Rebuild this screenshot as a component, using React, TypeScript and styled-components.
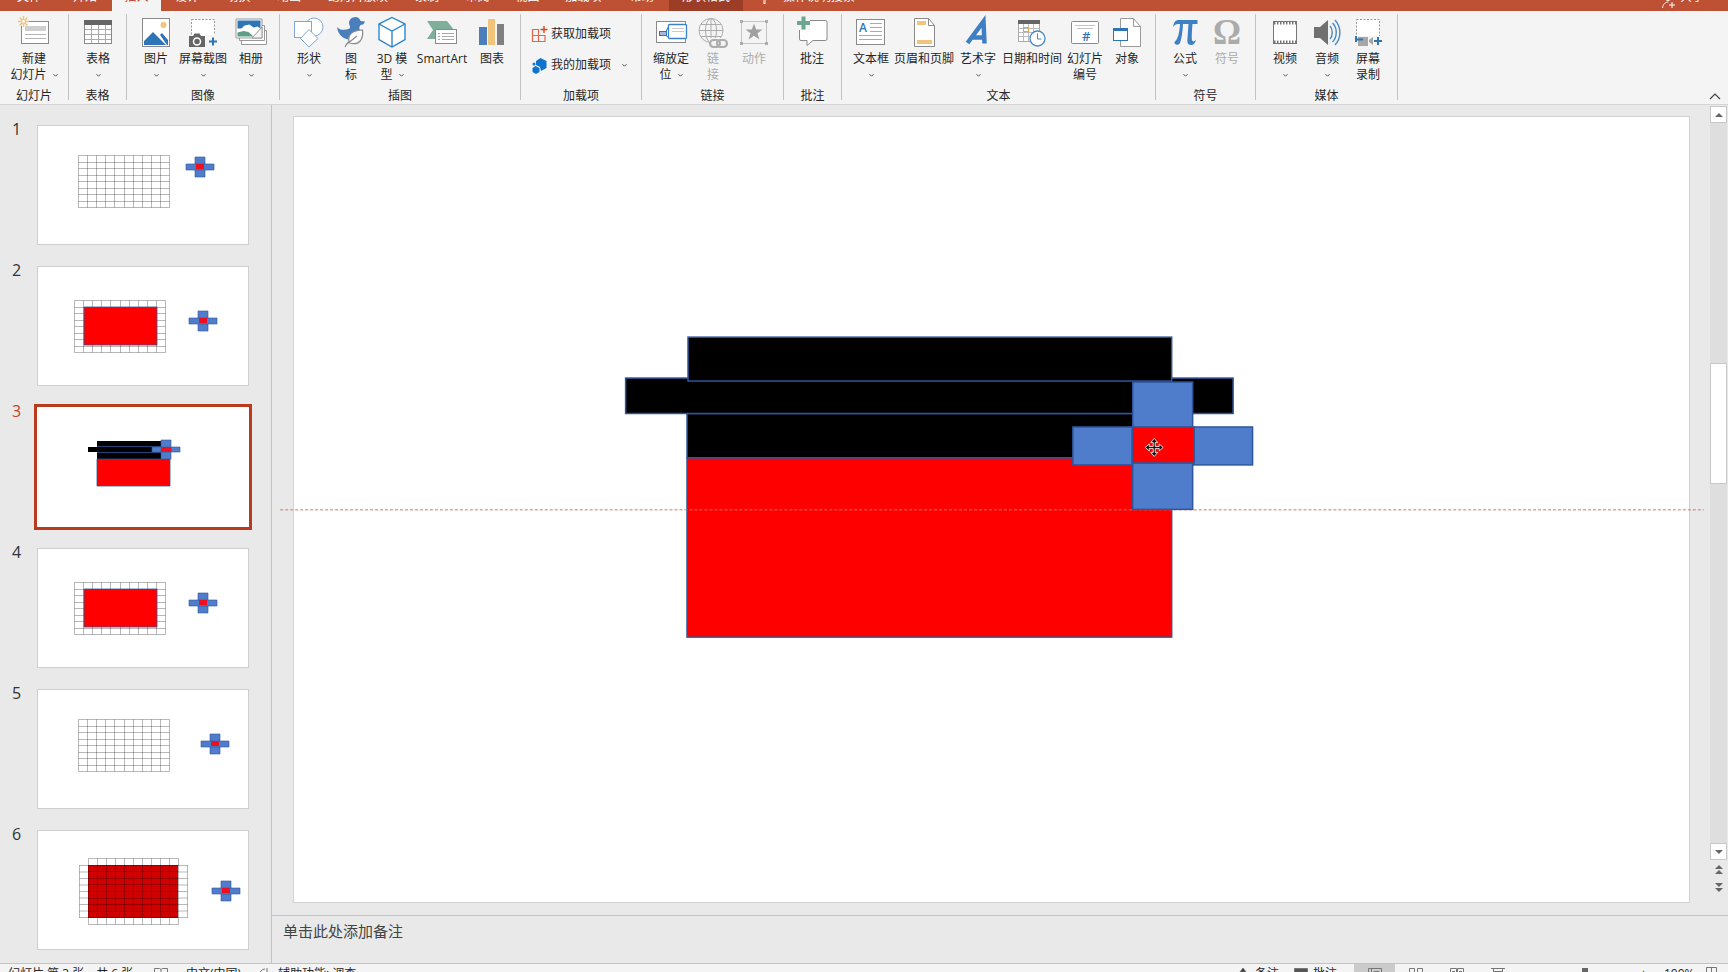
import React from 'react';
import styled, { createGlobalStyle } from 'styled-components';

const color = {
  brand: '#be5033',
  brandDark: '#9c3d27',
  accent: '#b83b1d',
  ribbon: '#f4f4f4',
  canvas: '#e9e9e9',
  line: '#c3c3c3',
  text: '#262626',
  muted: '#ababab',
  blue: '#2e75b6',
  steel: '#4a7fbb',
  grey: '#7a7a7a',
  green: '#7fae9b',
  gold: '#f0c47a',
  shape: '#4f7dcb',
  shapeLine: '#2f569c',
};

const GlobalStyle = createGlobalStyle`
  *, *::before, *::after { box-sizing: border-box; }
  body {
    margin: 0;
    overflow: hidden;
    background: ${color.canvas};
    color: ${color.text};
    font: 12px/16px "Open Sans", "Noto Sans CJK SC", sans-serif;
  }
  button, textarea { font: inherit; color: inherit; }
  button { margin: 0; padding: 0; border: 0; background: none; cursor: default; }
`;

const Shell = styled.div`
  display: flex;
  flex-direction: column;
  height: 100vh;
`;

/* ---------- tab strip ---------- */

const TabStrip = styled.nav`
  display: flex;
  align-items: flex-end;
  flex: none;
  height: 11px;
  overflow: hidden;
  background: ${color.brand};
  color: #fff;
`;

const Tab = styled.button<{ $width: number; $tone?: 'active' | 'context' }>`
  display: flex;
  align-items: flex-end;
  justify-content: center;
  flex: none;
  width: ${p => p.$width}px;
  height: 30px;
  padding-bottom: 6px;
  white-space: nowrap;
  background: ${p => (p.$tone === 'active' ? color.ribbon : p.$tone === 'context' ? color.brandDark : 'transparent')};
  color: ${p => (p.$tone === 'active' ? color.accent : '#fff')};
`;

const TellMe = styled.button`
  display: flex;
  align-items: flex-end;
  gap: 14px;
  height: 30px;
  padding: 0 0 6px 17px;
  svg { margin-bottom: -3px; }
`;

const Share = styled(TellMe)`
  margin-left: auto;
  padding-right: 24px;
  gap: 4px;
`;

/* ---------- ribbon ---------- */

const Ribbon = styled.div`
  display: flex;
  flex: none;
  height: 94px;
  padding: 3px 0 4px;
  background: ${color.ribbon};
  border-bottom: 1px solid #d6d6d6;
`;

const Group = styled.section<{ $width: number }>`
  display: flex;
  flex-direction: column;
  justify-content: space-between;
  flex: none;
  width: ${p => p.$width}px;
  border-right: 1px solid ${color.line};
`;

const GroupBody = styled.div<{ $pad: number }>`
  display: flex;
  padding-left: ${p => p.$pad}px;
`;

const GroupName = styled.h2`
  margin: 0;
  font-size: 12px;
  line-height: 8px;
  font-weight: 400;
  text-align: center;
`;

const Tool = styled.button<{ $width: number; $off?: boolean }>`
  display: flex;
  flex-direction: column;
  align-items: center;
  flex: none;
  width: ${p => p.$width}px;
  padding-top: 1px;
  white-space: nowrap;
  color: ${p => (p.$off ? color.muted : color.text)};
`;

const ToolIcon = styled.svg`
  display: block;
  width: 32px;
  height: 32px;
  margin-bottom: 4px;
  overflow: visible;
`;

const ToolLine = styled.span`
  display: flex;
  align-items: center;
  gap: 6px;
  height: 16px;
`;

const AddinList = styled.div`
  display: flex;
  flex-direction: column;
  gap: 7px;
  padding: 8px 0 0 10px;
`;

const AddinButton = styled.button`
  display: flex;
  align-items: center;
  gap: 3px;
  height: 24px;
`;

const AddinArrow = styled.span`
  display: flex;
  padding-left: 8px;
`;

const CollapseButton = styled.button`
  align-self: flex-end;
  margin-left: auto;
  padding-right: 7px;
  line-height: 8px;
  svg { display: block; }
`;

function Chevron() {
  return (
    <svg width="5" height="5" viewBox="0 0 5 5" aria-hidden="true">
      <path d="M0.5 1.2 2.5 3.2 4.5 1.2" fill="none" stroke="#555" />
    </svg>
  );
}

/* ---------- ribbon icons, each on a 32 × 32 grid ---------- */

const serifGlyph = { fontFamily: '"Liberation Serif", serif', fontWeight: 700 };
const sansGlyph = { fontFamily: '"Open Sans", sans-serif', fontWeight: 600 };

const icons: Record<string, React.ReactNode> = {
  newSlide: (
    <>
      <rect x="3.5" y="6.5" width="27" height="22" fill="#fff" stroke="#8a8a8a" />
      <rect x="7" y="11" width="21" height="5" fill="#cfcfcf" />
      <path d="M7 19.5h21M7 23.5h21" stroke="#b5b5b5" />
      <circle cx="5.5" cy="6.5" r="5" fill={color.ribbon} />
      <path d="M5.5 1v11M0 6.5h11M1.6 2.6l7.8 7.8M9.4 2.6 1.6 10.4" stroke={color.gold} strokeWidth="1.4" />
      <circle cx="5.5" cy="6.5" r="2" fill="#fff" stroke={color.gold} />
    </>
  ),
  table: (
    <>
      <rect x="2.5" y="5.5" width="27" height="23" fill="#fff" stroke="#8a8a8a" />
      <rect x="2" y="5" width="28" height="5" fill="#666" />
      <path d="M3 14.5h26M3 19.5h26M3 24.5h26M9.5 10v18M16.5 10v18M23.5 10v18" stroke="#aaa" />
    </>
  ),
  picture: (
    <>
      <rect x="2.5" y="3.5" width="27" height="28" fill="#fff" stroke="#8a8a8a" />
      <circle cx="23.5" cy="10" r="3" fill={color.gold} />
      <path d="M4 30v-4l9-9 13 13zM20 20l2-2 6 7v5h-1z" fill={color.blue} />
    </>
  ),
  screenshot: (
    <>
      <rect x="4.5" y="4.5" width="23" height="23" fill="#fff" stroke="#999" strokeDasharray="2 1.5" />
      <path d="M2 21h4l1.5-2.500h5L14 21h4v11H2z" fill="#666" />
      <circle cx="10" cy="26.500" r="3.500" fill="#666" stroke="#fff" strokeWidth="1.500" />
      <path d="M18.500 20h12v10h-12z" fill={color.ribbon} />
      <path d="M22 26.500h8M26 22.500v8" stroke={color.blue} strokeWidth="2" />
    </>
  ),
  album: (
    <>
      <path d="M6.500 15.500h25v14h-25z" fill="#fff" stroke="#999" />
      <path d="M4.500 10.500h25v15h-25z" fill="#fff" stroke="#999" />
      <path d="M1 4h26v19H1z" fill="#fff" stroke="#999" />
      <path d="M2.500 5.500h23v8l-3-2-4 1-4-3-5 1-3 3h-4z" fill={color.blue} />
      <path d="M2.500 21.500v-4l6-1.500 5 1 5 4.500z" fill="#5d9c86" />
      <path d="M17 23 27 12v11z" fill="#f4f4f4" stroke="#999" />
    </>
  ),
  shapes: (
    <>
      <circle cx="21" cy="12" r="9" fill="#fff" stroke="#7fa9d2" />
      <rect x="1.500" y="6.500" width="17" height="16" fill="#fff" stroke="#7fa9d2" />
      <path d="M16 14.500 25 23.500 16 32 7.500 23.500z" fill="#fff" stroke="#7fa9d2" />
    </>
  ),
  glyphs: (
    <>
      <path d="M14 7.500a6 6 0 0 1 11.600-1.500l4.400.500c-.500 2.500-2.500 3.500-4.500 3.500-1 2-2 3 0 5.500-6 1-9.500 5-10.500 9C8 24 3 20 2 12c3 3.500 8 3.500 12.500 1.500 1.500-1.500-.500-3-.500-6z" fill={color.steel} />
      <path d="M10 32c1-2 2.500-4 4-5.500-1.500-8 4-11 13.500-11.500 1 9-3 16-13 13z" fill="#fff" />
      <path d="M10 32c1-2 2.500-4 4-5.500-1.500-8 4-11 13.500-11.500 1 9-3 16-13 13M12 29l10-8" fill="none" stroke="#8a8a8a" strokeWidth="1.200" />
    </>
  ),
  cube: (
    <>
      <path d="M16 2.500 29 9v15.500L16 32 3 24.500V9z" fill="#fff" stroke="#1f7fcb" strokeWidth="1.300" />
      <path d="M3 9l13 7 13-7M16 16v16" fill="none" stroke="#1f7fcb" strokeWidth="1.300" />
    </>
  ),
  smartArt: (
    <>
      <path d="M1 6h20l7 9-7 9H1l6-9z" fill={color.green} />
      <rect x="9.500" y="14.500" width="21" height="14" fill="#fff" stroke="#8a8a8a" />
      <path d="M12 18.500h2M16 18.500h12M12 21.500h2M16 21.500h12M12 24.500h2M16 24.500h12" stroke="#aaa" />
    </>
  ),
  chart: (
    <>
      <path d="M3 12h8v18H3z" fill={color.steel} />
      <path d="M12 4h7v26h-7z" fill={color.gold} />
      <path d="M21 9h7v21h-7z" fill="#808080" />
    </>
  ),
  zoom: (
    <>
      <rect x="1.500" y="6.500" width="29" height="21" fill="#fff" stroke="#8a8a8a" />
      <rect x="4.500" y="16.500" width="7" height="4" fill="#a9b8d6" stroke={color.blue} />
      <path d="M11 16.500l3-6M11 20.500l3 2.500" stroke={color.blue} />
      <rect x="13.500" y="9.500" width="18" height="14" rx="1" fill="#fff" stroke="#3c82c8" strokeWidth="1.300" />
      <path d="M17 13.500h12M17 16.500h12" stroke="#ccc" />
    </>
  ),
  link: (
    <g fill="none" stroke="#adadad">
      <circle cx="14" cy="15.500" r="12" />
      <ellipse cx="14" cy="15.500" rx="5.500" ry="12" />
      <path d="M14 3.500v24M2 15.500h24M4 9.500h20M4 21.500h20" />
      <rect x="12" y="23" width="19" height="11" fill={color.ribbon} stroke="none" />
      <rect x="13" y="25" width="10" height="7" rx="3.500" strokeWidth="2.200" />
      <rect x="20" y="25" width="10" height="7" rx="3.500" strokeWidth="2.200" />
    </g>
  ),
  action: (
    <>
      <rect x="3.500" y="6.500" width="25" height="22" fill="none" stroke="#c4c4c4" />
      <path d="M2 5h3v3H2zM27 5h3v3h-3zM2 27h3v3H2zM27 27h3v3h-3z" fill="#adadad" />
      <path d="M16 8.500l2.200 6h6.300l-5 3.800 1.900 6.200-5.400-3.700-5.400 3.700 1.900-6.200-5-3.800h6.300z" fill="#a0a0a0" />
    </>
  ),
  comment: (
    <>
      <path d="M3.500 5.500h26a1.500 1.500 0 0 1 1.500 1.500v17a1.500 1.500 0 0 1-1.500 1.500H17l-6 5v-5H5a1.500 1.500 0 0 1-1.500-1.500z" fill="#fff" stroke="#8a8a8a" />
      <path d="M-1 0H14v15H-1z" fill={color.ribbon} />
      <path d="M7.500 1.500v13M1 8h13" stroke="#6da68f" strokeWidth="4" />
    </>
  ),
  textBox: (
    <>
      <rect x="1.500" y="4.500" width="28" height="25" fill="#fff" stroke="#8a8a8a" />
      <text x="4" y="17" fontSize="12" fill={color.blue} style={sansGlyph}>A</text>
      <path d="M15 8.500h12M15 12.500h12M15 16.500h12M4 20.500h23M4 24.500h23" stroke="#aaa" />
    </>
  ),
  headerFooter: (
    <>
      <path d="M6.500 3.500h14l6 7v21h-20z" fill="#fff" stroke="#8a8a8a" />
      <path d="M20.500 3.500v7h6" fill="none" stroke="#8a8a8a" />
      <path d="M9 6h9v4H9zM9 25h15v4H9z" fill={color.gold} />
    </>
  ),
  wordArt: (
    <path d="M5.500 28 21.500 6.500 22.500 28.500M10.500 22.500H22.500" fill="none" stroke="#3f7fc4" strokeWidth="4.500" />
  ),
  date: (
    <>
      <rect x="2.500" y="5.500" width="21" height="21" fill="#fff" stroke="#aaa" />
      <path d="M2 5h22v4H2z" fill="#666" />
      <path d="M3 13.500h20M3 17.500h20M3 21.500h20M7.500 9v17M12.500 9v17M17.500 9v17" stroke="#bbb" />
      <rect x="7.500" y="12.500" width="5" height="4" fill="none" stroke="#f0a23c" />
      <circle cx="21.500" cy="23.500" r="7.500" fill="#fff" stroke="#4a8ac6" strokeWidth="1.300" />
      <path d="M21.500 18.500v5.500h4" fill="none" stroke="#4a8ac6" />
    </>
  ),
  slideNumber: (
    <>
      <rect x="2.500" y="6.500" width="27" height="22" rx="1" fill="#fff" stroke="#8a8a8a" />
      <path d="M6 10.500h20M8 13.500h16" stroke="#c4c4c4" />
      <text x="13" y="26" fontSize="13" fill={color.blue} style={sansGlyph}>#</text>
    </>
  ),
  object: (
    <>
      <path d="M9.500 3.500h13l7 8v20h-20z" fill="#fff" stroke="#9a9a9a" />
      <path d="M22.500 3.500v8h7" fill="none" stroke="#9a9a9a" />
      <rect x="2.500" y="13.500" width="14" height="12" fill="#fff" stroke={color.blue} />
      <path d="M2 13h15v3H2z" fill={color.blue} />
    </>
  ),
  equation: (
    <path d="M4 12C5 6 7 5 10 5H28.500V9H23.500C23 15 22.500 22 23 25 23.500 27 25.500 27 27 24.500 26.500 28 24.500 30 22 30 18.500 30 18 27 18.500 23L19.500 9H14C13.500 18 12.500 24 11 28 9.500 31 5 30 5.500 27 9 24 10.500 18 11 9H9C7 9 5.500 10 4 12Z" fill="#3f7fc4" />
  ),
  symbol: (
    <text x="2" y="29" fontSize="35" fill="#ababab" style={serifGlyph}>Ω</text>
  ),
  video: (
    <>
      <rect x="4.500" y="6.500" width="23" height="22" fill="#fff" stroke="#777" />
      <path d="M5 8h22M5 27h22" stroke="#777" strokeWidth="3" strokeDasharray="1.500 1.500" />
    </>
  ),
  audio: (
    <>
      <path d="M3 12h6l8-7v25l-8-7H3z" fill="#707070" />
      <path d="M19 11c3 3 3 10 0 13M21.500 8c5 5 5 14 0 19M24 5c6.500 7 6.500 18 0 25" fill="none" stroke="#4a8ac6" strokeWidth="1.400" />
    </>
  ),
  record: (
    <>
      <rect x="4.500" y="4.500" width="23" height="23" fill="#fff" stroke="#999" strokeDasharray="2 1.500" />
      <path d="M3 21h27v10H3z" fill={color.ribbon} />
      <path d="M6 22h10v9H6zM17 25l4-3v8l-4-3z" fill="#a6a6a6" />
      <path d="M4 21v6M3 24.500h8M22 26h8M26 22v8" stroke={color.blue} strokeWidth="2" />
    </>
  ),
};

interface ToolSpec {
  icon: string;
  width: number;
  lines: string[];
  menu?: boolean;
  off?: boolean;
}

interface GroupSpec {
  name: string;
  width: number;
  pad: number;
  tools: ToolSpec[];
}

const groupsBeforeAddins: GroupSpec[] = [
  { name: '幻灯片', width: 69, pad: 0, tools: [{ icon: 'newSlide', width: 68, lines: ['新建', '幻灯片'], menu: true }] },
  { name: '表格', width: 58, pad: 0, tools: [{ icon: 'table', width: 58, lines: ['表格'], menu: true }] },
  {
    name: '图像', width: 153, pad: 8, tools: [
      { icon: 'picture', width: 42, lines: ['图片'], menu: true },
      { icon: 'screenshot', width: 52, lines: ['屏幕截图'], menu: true },
      { icon: 'album', width: 44, lines: ['相册'], menu: true },
    ],
  },
  {
    name: '插图', width: 241, pad: 8, tools: [
      { icon: 'shapes', width: 42, lines: ['形状'], menu: true },
      { icon: 'glyphs', width: 42, lines: ['图', '标'] },
      { icon: 'cube', width: 40, lines: ['3D 模', '型'], menu: true },
      { icon: 'smartArt', width: 60, lines: ['SmartArt'] },
      { icon: 'chart', width: 40, lines: ['图表'] },
    ],
  },
];

const groupsAfterAddins: GroupSpec[] = [
  {
    name: '链接', width: 142, pad: 5, tools: [
      { icon: 'zoom', width: 48, lines: ['缩放定', '位'], menu: true },
      { icon: 'link', width: 36, lines: ['链', '接'], off: true },
      { icon: 'action', width: 46, lines: ['动作'], off: true },
    ],
  },
  { name: '批注', width: 58, pad: 0, tools: [{ icon: 'comment', width: 56, lines: ['批注'] }] },
  {
    name: '文本', width: 314, pad: 9, tools: [
      { icon: 'textBox', width: 40, lines: ['文本框'], menu: true },
      { icon: 'headerFooter', width: 66, lines: ['页眉和页脚'] },
      { icon: 'wordArt', width: 42, lines: ['艺术字'], menu: true },
      { icon: 'date', width: 66, lines: ['日期和时间'] },
      { icon: 'slideNumber', width: 40, lines: ['幻灯片', '编号'] },
      { icon: 'object', width: 44, lines: ['对象'] },
    ],
  },
  {
    name: '符号', width: 100, pad: 8, tools: [
      { icon: 'equation', width: 42, lines: ['公式'], menu: true },
      { icon: 'symbol', width: 42, lines: ['符号'], off: true },
    ],
  },
  {
    name: '媒体', width: 142, pad: 8, tools: [
      { icon: 'video', width: 42, lines: ['视频'], menu: true },
      { icon: 'audio', width: 42, lines: ['音频'], menu: true },
      { icon: 'record', width: 40, lines: ['屏幕', '录制'] },
    ],
  },
];

function RibbonGroup({ spec }: { spec: GroupSpec }) {
  return (
    <Group $width={spec.width}>
      <GroupBody $pad={spec.pad}>
        {spec.tools.map(t => (
          <Tool key={t.icon} $width={t.width} $off={t.off} disabled={t.off}>
            <ToolIcon viewBox="0 0 32 32" aria-hidden="true">{icons[t.icon]}</ToolIcon>
            <ToolLine>{t.lines[0]}</ToolLine>
            <ToolLine>
              {t.lines[1]}
              {t.menu && <Chevron />}
            </ToolLine>
          </Tool>
        ))}
      </GroupBody>
      <GroupName>{spec.name}</GroupName>
    </Group>
  );
}

function AddinsGroup() {
  return (
    <Group $width={121}>
      <AddinList>
        <AddinButton>
          <svg width="17" height="17" viewBox="0 0 17 17" fill="none" aria-hidden="true">
            <path d="M8 3.500H1.500v12H14V9M1.500 9.500H14M7.500 3.500v12" stroke="#e0694a" strokeWidth="1.200" />
            <path d="M13 0v7M9.500 3.500h7" stroke="#d8421f" strokeWidth="1.400" />
          </svg>
          获取加载项
        </AddinButton>
        <AddinButton>
          <svg width="17" height="17" viewBox="0 0 17 17" fill="#0f74cc" aria-hidden="true">
            <path d="M9.500 1 15.500 4v7l-5.500 3-1-4-4-2V4z" />
            <path d="M4.500 9 8.500 11v4L5 17l-3.500-2v-4z" />
            <circle cx="3" cy="7" r="1.500" />
          </svg>
          我的加载项
          <AddinArrow><Chevron /></AddinArrow>
        </AddinButton>
      </AddinList>
      <GroupName>加载项</GroupName>
    </Group>
  );
}

/* ---------- work area ---------- */

const Work = styled.div`
  display: flex;
  flex: 1;
  min-height: 0;
`;

const SlideList = styled.aside`
  display: flex;
  flex-direction: column;
  gap: 15px;
  flex: none;
  width: 272px;
  padding-top: 14px;
  overflow: hidden;
  border-right: 1px solid ${color.line};
`;

const SlideRow = styled.div<{ $current?: boolean }>`
  display: flex;
  flex: none;
  font-size: 16px;
  line-height: 20px;
  color: ${p => (p.$current ? '#c8402a' : '#333')};
`;

const SlideNumber = styled.span`
  width: 37px;
  padding-left: 12px;
`;

const Thumb = styled.button<{ $current?: boolean }>`
  width: 212px;
  height: 120px;
  margin-top: 6px;
  background: #fff;
  box-shadow: ${p => (p.$current ? `0 0 0 3px ${color.accent}` : 'inset 0 0 0 1px #cfcfcf')};
`;

const Drawing = styled.svg`
  display: block;
  width: 100%;
  height: 100%;
  overflow: visible;
`;

function Grid({ x, y, cols, rows, w, h }: { x: number; y: number; cols: number; rows: number; w: number; h: number }) {
  const lines: string[] = [];
  for (let c = 0; c <= cols; c++) lines.push(`M${Math.round(x + (w * c) / cols) + 0.5} ${y + 0.5}v${h}`);
  for (let r = 0; r <= rows; r++) lines.push(`M${x + 0.5} ${Math.round(y + (h * r) / rows) + 0.5}h${w}`);
  return <path d={lines.join('')} fill="none" stroke="#000" strokeOpacity="0.28" />;
}

function MiniCross({ x, y }: { x: number; y: number }) {
  return (
    <g fill={color.shape} stroke={color.shapeLine} strokeWidth="0.600">
      <path d={`M${x - 5} ${y - 10}h10v20h-10z`} />
      <path d={`M${x - 14} ${y - 3}h28v6h-28z`} />
      <path d={`M${x - 4} ${y - 3}h8v5h-8z`} fill="#ee1020" stroke="none" />
    </g>
  );
}

function FramedRed() {
  return (
    <>
      <Grid x={37} y={34} cols={10} rows={8} w={91} h={52} />
      <rect x="47" y="41" width="73" height="38" fill="#f00" stroke={color.shapeLine} strokeWidth="0.800" />
      <MiniCross x={166} y={55} />
    </>
  );
}

const thumbs: React.ReactNode[] = [
  <>
    <Grid x={41} y={30} cols={10} rows={8} w={91} h={52} />
    <MiniCross x={163} y={42} />
  </>,
  <FramedRed />,
  <>
    <path d="M60 34h73v18H60zM51 40h78v5H51z" />
    <path d="M60 52h73v27H60z" fill="#f00" stroke={color.shapeLine} strokeWidth="0.800" />
    <path d="M60 39.500h64M60 45.500h64" stroke={color.shapeLine} strokeWidth="0.800" />
    <path d="M124 33h10v19h-10zM115 40h28v5h-28z" fill={color.shape} stroke={color.shapeLine} strokeWidth="0.600" />
    <path d="M124 40h10v5h-10z" fill="#ee1020" />
  </>,
  <FramedRed />,
  <>
    <Grid x={41} y={30} cols={10} rows={8} w={91} h={52} />
    <MiniCross x={178} y={55} />
  </>,
  <>
    <rect x="51" y="35" width="90" height="53" fill="#d00000" />
    <Grid x={51} y={28} cols={10} rows={10} w={90} h={66} />
    <path d="M42.500 35.500h9M42.500 42h9M42.500 48.500h9M42.500 55h9M42.500 61.500h9M42.500 68h9M42.500 74.500h9M42.500 81h9M42.500 87.500h9M42.500 35v53M141.500 35.500h9M141.500 42h9M141.500 48.500h9M141.500 55h9M141.500 61.500h9M141.500 68h9M141.500 74.500h9M141.500 81h9M141.500 87.500h9M150.500 35v53" stroke="#000" strokeOpacity="0.280" />
    <MiniCross x={189} y={61} />
  </>,
];

const Editor = styled.main`
  display: flex;
  flex-direction: column;
  flex: 1;
  min-width: 0;
`;

const Stage = styled.div`
  display: flex;
  flex: 1;
  min-height: 0;
`;

const StageBody = styled.div`
  flex: 1;
  min-width: 0;
  padding: 12px 21px 0 22px;
`;

const Slide = styled.div`
  aspect-ratio: 16 / 9;
  background: #fff;
  box-shadow: 0 0 0 1px #d2d2d2;
`;

function SlideDrawing() {
  return (
    <Drawing viewBox="0 0 1397 786" role="img" aria-label="幻灯片 3">
      <g stroke={color.shapeLine} strokeWidth="1.500">
        <rect x="393.500" y="297" width="485.500" height="44.500" />
        <rect x="332" y="261.500" width="608.500" height="35.500" />
        <rect x="394.500" y="220.500" width="484.500" height="44" />
        <rect x="393.500" y="341.500" width="485.500" height="179.500" fill="#f00" />
      </g>
      <path d="M-14 393.500H1412" stroke="#c57b6f" strokeDasharray="3 2" />
      <g fill={color.shape} stroke={color.shapeLine} strokeWidth="1.500">
        <rect x="840" y="265.500" width="60" height="45.500" />
        <rect x="840" y="346.500" width="60" height="46.500" />
        <rect x="780" y="310.500" width="59.500" height="38" />
        <rect x="901" y="310.500" width="59" height="38" />
        <rect x="839.500" y="310.500" width="62" height="36" fill="#f00" />
      </g>
      <g transform="translate(861.500 331)" fill="#111" stroke="#fff" strokeWidth="0.800">
        <path d="M0-9 3.500-5H1v4h4v-2.500L9 0 5 3.500V1H1v4h2.500L0 9-3.500 5H-1V1h-4v2.500L-9 0l4-3.500V-1h4v-4h-2.500z" />
      </g>
    </Drawing>
  );
}

const Scroll = styled.div`
  display: flex;
  flex-direction: column;
  flex: none;
  width: 18px;
  padding: 1px 1px 19px 0;
`;

const ScrollButton = styled.button`
  display: grid;
  place-items: center;
  flex: none;
  height: 17px;
  background: #fff;
  border: 1px solid #c8c8c8;
`;

const JumpButton = styled.button`
  display: grid;
  place-items: center;
  flex: none;
  height: 18px;
`;

const Track = styled.div`
  display: flex;
  flex-direction: column;
  flex: 1;
  background: #dedede;
`;

const TrackSpace = styled.div<{ $share: number }>`
  flex: ${p => p.$share};
`;

const Handle = styled.div`
  flex: 119;
  background: #fff;
  border: 1px solid #c8c8c8;
`;

function Arrow({ down, double }: { down?: boolean; double?: boolean }) {
  const h = double ? 9 : 4;
  return (
    <svg width="8" height={h} viewBox={`0 0 8 ${h}`} fill="#666" aria-hidden="true">
      <g transform={down ? `rotate(180 4 ${h / 2})` : undefined}>
        <path d="M4 0 8 4H0z" />
        {double && <path d="M4 5 8 9H0z" />}
      </g>
    </svg>
  );
}

const Notes = styled.textarea`
  display: block;
  flex: none;
  height: 48px;
  width: 100%;
  padding: 5px 11px;
  resize: none;
  border: 0;
  border-top: 1px solid ${color.line};
  background: ${color.canvas};
  font-size: 15px;
  line-height: 20px;
  outline: none;
  &::placeholder { color: #444; opacity: 1; }
`;

/* ---------- status bar ---------- */

const StatusBar = styled.footer`
  display: flex;
  align-items: flex-start;
  flex: none;
  height: 9px;
  overflow: hidden;
  padding: 0 12px 0 8px;
  border-top: 1px solid ${color.line};
  background: ${color.ribbon};
`;

const StatusButton = styled.button<{ $width: number }>`
  display: flex;
  gap: 5px;
  flex: none;
  width: ${p => p.$width}px;
  padding-top: 2px;
  white-space: nowrap;
`;

const StatusSpacer = styled.div`
  flex: 1;
`;

const ViewButton = styled.button<{ $on?: boolean }>`
  display: flex;
  justify-content: center;
  flex: none;
  width: 41px;
  height: 24px;
  padding-top: 3px;
  background: ${p => (p.$on ? '#cbcbcb' : 'transparent')};
`;

const ZoomTrack = styled.div`
  display: flex;
  justify-content: center;
  flex: none;
  width: 122px;
  padding: 4px 0 0 12px;
`;

const StatusIcon = styled.svg`
  flex: none;
  width: 14px;
  height: 14px;
  margin-top: 1px;
  fill: none;
  stroke: #777;
`;

const tabs: { name: string; width: number; tone?: 'active' | 'context' }[] = [
  { name: '文件', width: 58 },
  { name: '开始', width: 54 },
  { name: '插入', width: 49, tone: 'active' },
  { name: '设计', width: 52 },
  { name: '切换', width: 51 },
  { name: '动画', width: 50 },
  { name: '幻灯片放映', width: 88 },
  { name: '录制', width: 50 },
  { name: '审阅', width: 51 },
  { name: '视图', width: 49 },
  { name: '加载项', width: 63 },
  { name: '帮助', width: 54 },
  { name: '形状格式', width: 74, tone: 'context' },
];

export default function App() {
  return (
    <Shell>
      <GlobalStyle />
      <TabStrip>
        {tabs.map(t => <Tab key={t.name} $width={t.width} $tone={t.tone}>{t.name}</Tab>)}
        <TellMe>
          <svg width="9" height="18" viewBox="0 0 9 18" fill="none" stroke="#fff" aria-hidden="true">
            <path d="M3 10C3 7.500.500 7 .500 4.500a4 4 0 0 1 8 0C8.500 7 6 7.500 6 10zM3 12h3M3.500 13.500h2" />
          </svg>
          操作说明搜索
        </TellMe>
        <Share>
          <svg width="14" height="14" viewBox="0 0 14 14" fill="none" stroke="#fff" aria-hidden="true">
            <circle cx="6" cy="3.500" r="3" />
            <path d="M.500 14c.500-4 3-6 6-6M7 11h6M10 8v6" />
          </svg>
          共享
        </Share>
      </TabStrip>

      <Ribbon>
        {groupsBeforeAddins.map(g => <RibbonGroup key={g.name} spec={g} />)}
        <AddinsGroup />
        {groupsAfterAddins.map(g => <RibbonGroup key={g.name} spec={g} />)}
        <CollapseButton aria-label="折叠功能区">
          <svg width="12" height="7" viewBox="0 0 12 7" fill="none" stroke="#444" aria-hidden="true">
            <path d="M1 6 6 1l5 5" strokeWidth="1.200" />
          </svg>
        </CollapseButton>
      </Ribbon>

      <Work>
        <SlideList>
          {thumbs.map((drawing, i) => {
            const current = i === 2;
            return (
              <SlideRow key={i} $current={current}>
                <SlideNumber>{i + 1}</SlideNumber>
                <Thumb $current={current} aria-label={`幻灯片 ${i + 1}`}>
                  <Drawing viewBox="0 0 212 120">{drawing}</Drawing>
                </Thumb>
              </SlideRow>
            );
          })}
        </SlideList>

        <Editor>
          <Stage>
            <StageBody>
              <Slide><SlideDrawing /></Slide>
            </StageBody>
            <Scroll>
              <ScrollButton aria-label="向上"><Arrow /></ScrollButton>
              <Track>
                <TrackSpace $share={241} />
                <Handle />
                <TrackSpace $share={360} />
              </Track>
              <ScrollButton aria-label="向下"><Arrow down /></ScrollButton>
              <JumpButton aria-label="上一张"><Arrow double /></JumpButton>
              <JumpButton aria-label="下一张"><Arrow double down /></JumpButton>
            </Scroll>
          </Stage>
          <Notes placeholder="单击此处添加备注" aria-label="备注" />
        </Editor>
      </Work>

      <StatusBar>
        <StatusButton $width={146}>幻灯片 第 3 张，共 6 张</StatusButton>
        <StatusButton $width={32} aria-label="拼写检查">
          <StatusIcon viewBox="0 0 14 14"><path d="M.500 1.500h5l1.500 1 1.500-1h5v10H.500zM7 2.500v10" /></StatusIcon>
        </StatusButton>
        <StatusButton $width={73}>中文(中国)</StatusButton>
        <StatusButton $width={110}>
          <StatusIcon viewBox="0 0 14 14"><path d="M6 2a5 5 0 1 0 3 9M8 1v5h4" /></StatusIcon>
          辅助功能: 调查
        </StatusButton>
        <StatusSpacer />
        <StatusButton $width={58}>
          <StatusIcon viewBox="0 0 14 14"><path d="M7 1 10 5H4zM2 8h10M2 11h10" fill="#333" /></StatusIcon>
          备注
        </StatusButton>
        <StatusButton $width={60}>
          <StatusIcon viewBox="0 0 14 14"><path d="M.500 1.500h13v8h-8l-3 3v-3h-2z" fill="#555" /></StatusIcon>
          批注
        </StatusButton>
        <ViewButton $on aria-label="普通视图">
          <StatusIcon viewBox="0 0 14 14"><path d="M.500.500h13v11H.500zM3.500 1v10M6 3.500h5v5H6z" /></StatusIcon>
        </ViewButton>
        <ViewButton aria-label="幻灯片浏览">
          <StatusIcon viewBox="0 0 14 14"><path d="M.500.500h5v5h-5zM8.500.500h5v5h-5zM.500 8h5v5h-5zM8.500 8h5v5h-5z" /></StatusIcon>
        </ViewButton>
        <ViewButton aria-label="阅读视图">
          <StatusIcon viewBox="0 0 14 14"><path d="M.500.500h6v11h-6zM7.500.500h6v11h-6zM2 3.500h3M9 3.500h3" /></StatusIcon>
        </ViewButton>
        <ViewButton aria-label="幻灯片放映">
          <StatusIcon viewBox="0 0 14 14"><path d="M0 .500h14M2.500 1v6h9V1M3 3.500h8M7 7v5" /></StatusIcon>
        </ViewButton>
        <ZoomTrack>
          <svg width="6" height="14" viewBox="0 0 6 14" aria-hidden="true"><path d="M0 0h6v14H0z" fill="#666" /></svg>
        </ZoomTrack>
        <StatusButton $width={24} aria-label="放大">+</StatusButton>
        <StatusButton $width={42}>100%</StatusButton>
        <StatusButton $width={10} aria-label="适应窗口">
          <StatusIcon viewBox="0 0 14 14"><path d="M.500.500h10v11H.500zM5.500 1v10M1 6h9" /></StatusIcon>
        </StatusButton>
      </StatusBar>
    </Shell>
  );
}
